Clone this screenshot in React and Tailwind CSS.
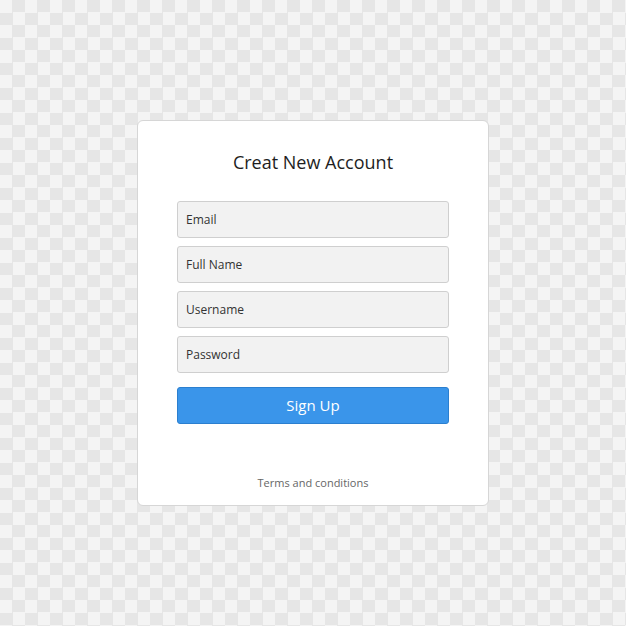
import React from 'react';

const fields = ['Email', 'Full Name', 'Username', 'Password'];

export default function App() {
  return (
    <div className="min-h-[626px] w-full flex items-center justify-center bg-[conic-gradient(#e6e6e6_25%,#f4f4f4_0_50%,#e6e6e6_0_75%,#f4f4f4_0)] bg-[length:25px_25px] font-['Open_Sans',sans-serif]">
      <div className="w-[352px] h-[386px] bg-white border border-[#d6d6d6] rounded-[6px] flex flex-col items-center px-[39px] pt-[28px]">
        <h1 className="text-[18px] leading-[26px] text-[#1e1e1e] font-normal">Creat New Account</h1>

        <form className="w-full mt-[26px] flex flex-col gap-[8px]">
          {fields.map((f) => (
            <input
              key={f}
              type={f === 'Password' ? 'password' : 'text'}
              placeholder={f}
              className="w-full h-[37px] bg-[#f2f2f2] border border-[#cfcfcf] rounded-[3px] px-[8px] text-[12px] text-[#333] placeholder:text-[#333] outline-none"
            />
          ))}
          <button
            type="button"
            className="mt-[6px] w-full h-[37px] bg-[#3a95ea] border border-[#2b7fcf] rounded-[3px] text-white text-[15px]"
          >
            Sign Up
          </button>
        </form>

        <a href="#" className="mt-[51px] text-[11px] leading-[16px] text-[#666]">
          Terms and conditions
        </a>
      </div>
    </div>
  );
}
